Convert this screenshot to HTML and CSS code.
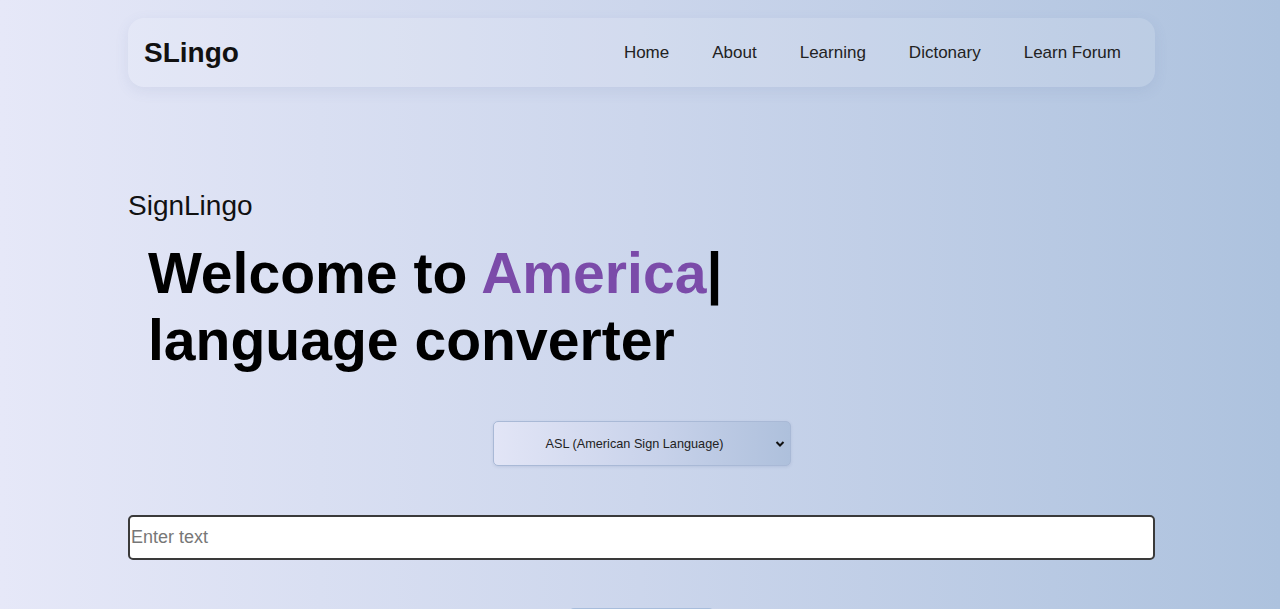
FILE: index.html
```html
<!DOCTYPE html>
<html lang="en">
<head>
<meta charset="utf-8">
<title>SLingo</title>
<link rel="stylesheet" href="styles.css">
</head>
<body>
<div class="container">
  <nav class="navbar">
    <div class="logo">SLingo</div>
    <ul class="nav-links">
      <li><a href="#">Home</a></li>
      <li><a href="#">About</a></li>
      <li><a href="#">Learning</a></li>
      <li><a href="#">Dictonary</a></li>
      <li><a href="#">Learn Forum</a></li>
    </ul>
  </nav>
  <section class="hero">
    <p class="subtitle">SignLingo</p>
    <h1 class="headline">Welcome to <span class="accent">America</span>|<br>language converter</h1>
    <div class="select-row">
      <select class="lang-select">
        <option>ASL (American Sign Language)</option>
      </select>
    </div>
    <input class="text-input" type="text" placeholder="Enter text">
    <div class="btn-row">
      <button class="convert-btn" aria-label="Convert"></button>
    </div>
  </section>
</div>
</body>
</html>
```
FILE: styles.css
```css
* { box-sizing: border-box; }
html, body { margin: 0; padding: 0; }
body {
  font-family: "Liberation Sans", Arial, sans-serif;
  background: linear-gradient(to right, #e6e8f8 0%, #ccd6ec 50%, #adc2de 100%);
  min-height: 100vh;
  color: #000;
  overflow: hidden;
}
.container {
  width: 1027px;
  margin-left: calc(50% - 512px);
  padding-top: 18px;
}
.navbar {
  height: 69px;
  display: flex;
  align-items: center;
  justify-content: space-between;
  padding: 0 34px 0 16px;
  border-radius: 16px;
  background: rgba(255, 255, 255, 0.12);
  box-shadow: 0 4px 14px rgba(90, 110, 160, 0.10);
}
.logo {
  font-size: 28px;
  font-weight: bold;
  color: #111;
}
.nav-links {
  list-style: none;
  margin: 0;
  padding: 0;
  display: flex;
  gap: 43px;
}
.nav-links a {
  text-decoration: none;
  color: #222;
  font-size: 17px;
}
.hero {
  padding-top: 103px;
}
.subtitle {
  margin: 0;
  font-size: 28px;
  line-height: 32px;
  color: #111;
}
.headline {
  margin: 18px 0 0;
  padding-left: 20px;
  font-size: 57.1px;
  line-height: 67px;
  font-weight: bold;
  color: #000;
}
.accent { color: #7b4ba9; }
.select-row {
  margin-top: 47px;
  display: flex;
  justify-content: center;
}
.lang-select {
  appearance: none;
  -webkit-appearance: none;
  width: 298px;
  height: 45px;
  border: 1px solid #a9b9d6;
  border-radius: 5px;
  font-family: "Liberation Sans", Arial, sans-serif;
  font-size: 12.7px;
  color: #222;
  text-align: center;
  text-align-last: center;
  padding: 0 34px 0 20px;
  background:
    url("data:image/svg+xml,%3Csvg xmlns='http://www.w3.org/2000/svg' width='10' height='8' viewBox='0 0 10 8'%3E%3Cpath d='M1.5 2 L5 5.5 L8.5 2' fill='none' stroke='%23111' stroke-width='2'/%3E%3C/svg%3E") no-repeat right 5px center,
    linear-gradient(to right, #e2e5f6, #c8d2ea 55%, #aec0dc);
  box-shadow: 0 1px 3px rgba(80, 100, 150, 0.15);
}
.text-input {
  display: block;
  margin-top: 49px;
  width: 100%;
  height: 45px;
  border: 2px solid #3a3a3a;
  border-radius: 5px;
  background: #fff;
  font-family: "Liberation Sans", Arial, sans-serif;
  font-size: 18px;
  padding: 0 1px;
}
.text-input::placeholder { color: #777; }
.btn-row {
  margin-top: 48px;
  display: flex;
  justify-content: center;
}
.convert-btn {
  width: 145px;
  height: 40px;
  border: none;
  border-radius: 5px;
  background: #a8bddc;
}
```
